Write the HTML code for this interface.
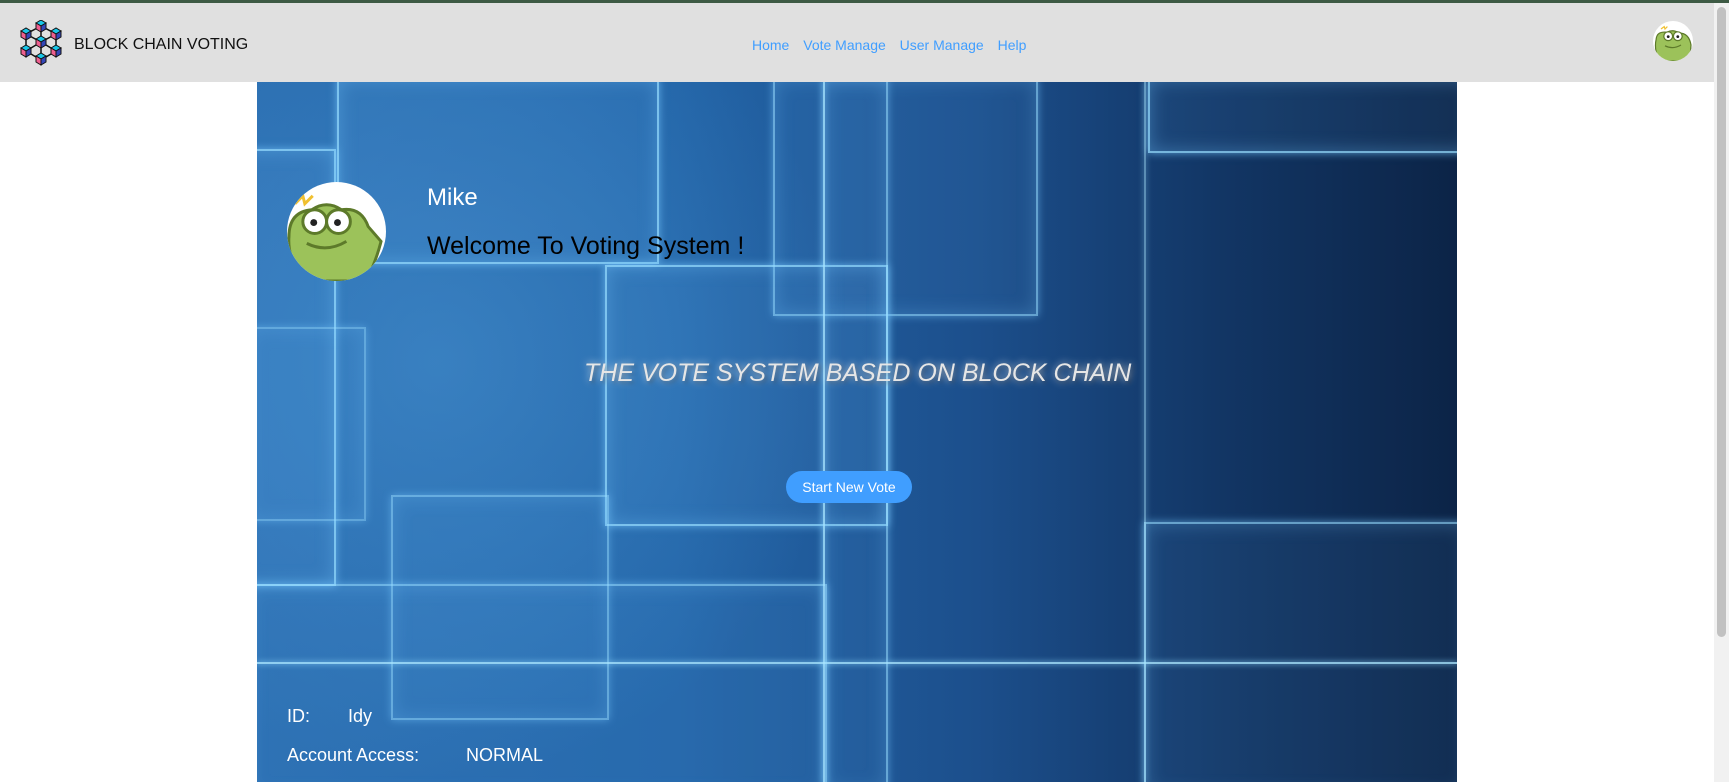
<!DOCTYPE html>
<html><head><meta charset="utf-8"><style>
html,body{margin:0;padding:0;width:1729px;height:782px;overflow:hidden;background:#fff;font-family:"Liberation Sans",Arial,sans-serif}
.top{position:absolute;left:0;top:0;width:1729px;height:3px;background:#3d5a44}
.hdr{position:absolute;left:0;top:3px;width:1714px;height:79px;background:#e0e0e0}
.brand{position:absolute;left:74px;top:33px;font-size:16px;color:#111}
.nav{position:absolute;top:34px;left:752px;font-size:14px;color:#409eff;white-space:nowrap}
.nav span{margin-right:10px}
.sb{position:absolute;left:1714px;top:3px;width:15px;height:779px;background:#f1f1f1}
.sb div{position:absolute;left:3px;top:4px;width:9px;height:630px;border-radius:5px;background:#c1c1c1}
.ban{position:absolute;left:257px;top:82px;width:1200px;height:700px;overflow:hidden;
background:linear-gradient(90deg,#2a6db0 0%,#2365a8 35%,#1c4f8c 60%,#123665 80%,#0c2447 100%)}
.bx{position:absolute;border:2px solid rgba(150,220,255,.75);box-shadow:0 0 8px rgba(120,200,255,.7),inset 0 0 18px rgba(120,200,255,.35);background:rgba(120,190,255,.08)}
.ln{position:absolute;background:rgba(170,230,255,.8);box-shadow:0 0 6px #8fd8ff}
.t{position:absolute;color:#fff;white-space:nowrap}
</style></head><body>
<div class="top"></div>
<div class="hdr">
<svg style="position:absolute;left:18px;top:17px" width="46" height="46" viewBox="0 0 46 46">
<g stroke="#111" stroke-width="1.5" fill="none"><path d="M23 6 L8 14 L8 31 L23 40 L38 31 L38 14 Z M23 6 L23 22 M8 14 L23 22 L38 14 M8 31 L23 22 L38 31 M23 22 L23 40"/></g>
<g stroke="#111" stroke-width="1">
<g transform="translate(23,6)"><path d="M-5-3 L0-6 L5-3 L0 0Z" fill="#19c6e8"/><path d="M-5-3 L0 0 L0 6 L-5 3Z" fill="#ee5f8f"/><path d="M5-3 L0 0 L0 6 L5 3Z" fill="#3446b8"/></g>
<g transform="translate(8,14)"><path d="M-5-3 L0-6 L5-3 L0 0Z" fill="#19c6e8"/><path d="M-5-3 L0 0 L0 6 L-5 3Z" fill="#ee5f8f"/><path d="M5-3 L0 0 L0 6 L5 3Z" fill="#3446b8"/></g>
<g transform="translate(38,14)"><path d="M-5-3 L0-6 L5-3 L0 0Z" fill="#19c6e8"/><path d="M-5-3 L0 0 L0 6 L-5 3Z" fill="#ee5f8f"/><path d="M5-3 L0 0 L0 6 L5 3Z" fill="#3446b8"/></g>
<g transform="translate(23,22)"><path d="M-5-3 L0-6 L5-3 L0 0Z" fill="#19c6e8"/><path d="M-5-3 L0 0 L0 6 L-5 3Z" fill="#ee5f8f"/><path d="M5-3 L0 0 L0 6 L5 3Z" fill="#3446b8"/></g>
<g transform="translate(8,31)"><path d="M-5-3 L0-6 L5-3 L0 0Z" fill="#19c6e8"/><path d="M-5-3 L0 0 L0 6 L-5 3Z" fill="#ee5f8f"/><path d="M5-3 L0 0 L0 6 L5 3Z" fill="#3446b8"/></g>
<g transform="translate(38,31)"><path d="M-5-3 L0-6 L5-3 L0 0Z" fill="#19c6e8"/><path d="M-5-3 L0 0 L0 6 L-5 3Z" fill="#ee5f8f"/><path d="M5-3 L0 0 L0 6 L5 3Z" fill="#3446b8"/></g>
<g transform="translate(23,39)"><path d="M-5-3 L0-6 L5-3 L0 0Z" fill="#19c6e8"/><path d="M-5-3 L0 0 L0 6 L-5 3Z" fill="#ee5f8f"/><path d="M5-3 L0 0 L0 6 L5 3Z" fill="#3446b8"/></g>
</g></svg>
<div class="brand">BLOCK CHAIN VOTING</div>
<div class="nav"><span>Home</span> <span>Vote Manage</span> <span>User Manage</span> <span>Help</span></div>
<svg style="position:absolute;left:1653px;top:18px" width="40" height="40" viewBox="0 0 100 100">
<defs><clipPath id="c1"><circle cx="50" cy="50" r="50"/></clipPath></defs>
<circle cx="50" cy="50" r="50" fill="#fff"/>
<g clip-path="url(#c1)"><path d="M8 45 Q10 25 35 28 Q50 20 65 30 Q90 30 95 60 L92 100 L15 100 Q2 70 8 45Z" fill="#9cc25a" stroke="#5d7a2a" stroke-width="3"/>
<circle cx="38" cy="38" r="11" fill="#fff" stroke="#5d7a2a" stroke-width="3"/><circle cx="62" cy="38" r="11" fill="#fff" stroke="#5d7a2a" stroke-width="3"/>
<circle cx="38" cy="39" r="3.5" fill="#222"/><circle cx="62" cy="39" r="3.5" fill="#222"/>
<path d="M30 62 Q50 72 70 60" stroke="#5d7a2a" stroke-width="3" fill="none"/>
<path d="M20 20 L28 14 L30 20 L36 14" stroke="#f0c030" stroke-width="3" fill="none"/></g></svg>
</div>
<div class="sb"><div></div></div>
<div class="ban">
<div style="position:absolute;left:0;top:0;width:600px;height:700px;background:radial-gradient(ellipse at 30% 40%,rgba(90,170,230,.35),transparent 70%)"></div>
<div class="bx" style="left:-20px;top:67px;width:95px;height:433px"></div>
<div class="bx" style="left:80px;top:-4px;width:318px;height:182px"></div>
<div class="bx" style="left:516px;top:-4px;width:261px;height:234px;opacity:.8"></div>
<div class="bx" style="left:348px;top:183px;width:279px;height:257px"></div>
<div class="bx" style="left:566px;top:-4px;width:61px;height:710px;opacity:.8"></div>
<div class="bx" style="left:891px;top:-4px;width:320px;height:71px"></div>
<div class="bx" style="left:887px;top:440px;width:320px;height:270px;opacity:.85"></div>
<div class="bx" style="left:-10px;top:502px;width:576px;height:210px;opacity:.8"></div>
<div class="bx" style="left:134px;top:413px;width:214px;height:221px;opacity:.7"></div>
<div class="bx" style="left:-10px;top:245px;width:115px;height:190px;opacity:.6"></div>
<div class="ln" style="left:0;top:580px;width:1200px;height:2px"></div>
<div class="ln" style="left:887px;top:0;width:2px;height:700px;opacity:.6"></div>
<div class="ln" style="left:566px;top:0;width:2px;height:700px;opacity:.7"></div>
<svg style="position:absolute;left:30px;top:100px" width="99" height="99" viewBox="0 0 100 100">
<defs><clipPath id="c2"><circle cx="50" cy="50" r="50"/></clipPath></defs>
<circle cx="50" cy="50" r="50" fill="#fff"/>
<g clip-path="url(#c2)"><path d="M2 55 Q2 30 25 28 Q40 18 55 28 Q75 25 82 45 L95 60 Q90 80 80 100 L20 100 Q0 80 2 55Z" fill="#9cc25a" stroke="#5d7a2a" stroke-width="3"/>
<circle cx="28" cy="40" r="12" fill="#fff" stroke="#5d7a2a" stroke-width="3"/><circle cx="52" cy="40" r="12" fill="#fff" stroke="#5d7a2a" stroke-width="3"/>
<circle cx="27" cy="41" r="3.5" fill="#222"/><circle cx="51" cy="41" r="3.5" fill="#222"/>
<path d="M20 62 Q40 72 60 60" stroke="#5d7a2a" stroke-width="3" fill="none"/>
<path d="M8 22 L16 14 L18 22 L26 14" stroke="#f0c030" stroke-width="3" fill="none"/></g></svg>
<div class="t" style="left:170px;top:102px;font-size:24px">Mike</div>
<div class="t" style="left:170px;top:150px;font-size:25px;color:#000">Welcome To Voting System !</div>
<div class="t" style="left:327px;top:277px;font-size:25px;font-style:italic;color:#e6e6e6;text-shadow:0 0 8px rgba(255,255,255,.8),2px 2px 4px rgba(0,0,0,.4)">THE VOTE SYSTEM BASED ON BLOCK CHAIN</div>
<div style="position:absolute;left:529px;top:389px;width:126px;height:32px;border-radius:16px;background:#409eff;color:#fff;font-size:14px;line-height:32px;text-align:center">Start New Vote</div>
<div class="t" style="left:30px;top:624px;font-size:18px">ID:</div>
<div class="t" style="left:91px;top:624px;font-size:18px">Idy</div>
<div class="t" style="left:30px;top:663px;font-size:18px">Account Access:</div>
<div class="t" style="left:209px;top:663px;font-size:18px">NORMAL</div>
</div>
</body></html>
